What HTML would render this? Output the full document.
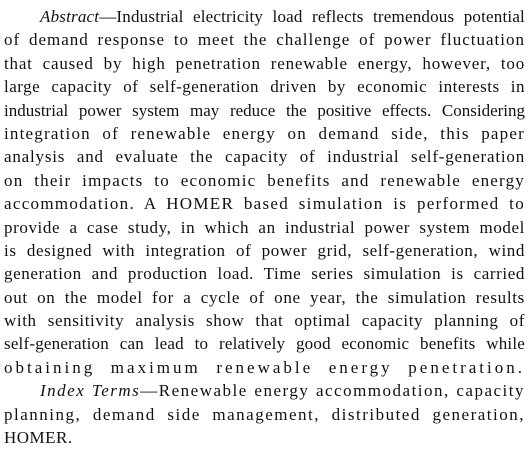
<!DOCTYPE html>
<html><head><meta charset="utf-8"><style>
html,body{margin:0;padding:0;background:#fff;}
body{width:530px;height:457px;overflow:hidden;font-family:"Liberation Serif","Noto Serif CJK SC",serif;font-size:17px;color:#111;}
.w{position:absolute;left:4px;top:5px;width:521px;}
.l{height:23.4px;line-height:23.4px;text-align:justify;text-align-last:justify;white-space:nowrap;letter-spacing:0.5px;}
.l.n{text-align-last:left;}
.i{padding-left:36px;}
</style></head><body><div class="w">
<div class="l i" style="letter-spacing:0.2px"><i>Abstract</i>—Industrial electricity load reflects tremendous potential</div>
<div class="l" style="letter-spacing:1px">of demand response to meet the challenge of power fluctuation</div>
<div class="l" style="letter-spacing:0.8px">that caused by high penetration renewable energy, however, too</div>
<div class="l" style="letter-spacing:0.5px">large capacity of self-generation driven by economic interests in</div>
<div class="l" style="letter-spacing:0">industrial power system may reduce the positive effects. Considering</div>
<div class="l" style="letter-spacing:1.2px">integration of renewable energy on demand side, this paper</div>
<div class="l" style="letter-spacing:0.8px">analysis and evaluate the capacity of industrial self-generation</div>
<div class="l" style="letter-spacing:1.2px">on their impacts to economic benefits and renewable energy</div>
<div class="l" style="letter-spacing:1.3px">accommodation. A HOMER based simulation is performed to</div>
<div class="l" style="letter-spacing:0.6px">provide a case study, in which an industrial power system model</div>
<div class="l" style="letter-spacing:0.6px">is designed with integration of power grid, self-generation, wind</div>
<div class="l" style="letter-spacing:0.6px">generation and production load. Time series simulation is carried</div>
<div class="l" style="letter-spacing:0.7px">out on the model for a cycle of one year, the simulation results</div>
<div class="l" style="letter-spacing:0.6px">with sensitivity analysis show that optimal capacity planning of</div>
<div class="l" style="letter-spacing:0.2px">self-generation can lead to relatively good economic benefits while</div>
<div class="l" style="letter-spacing:3px">obtaining maximum renewable energy penetration.</div>
<div class="l i" style="letter-spacing:1.5px"><i>Index Terms</i>—Renewable energy accommodation, capacity</div>
<div class="l" style="letter-spacing:1.5px">planning, demand side management, distributed generation,</div>
<div class="l n">HOMER.</div>
</div></body></html>
